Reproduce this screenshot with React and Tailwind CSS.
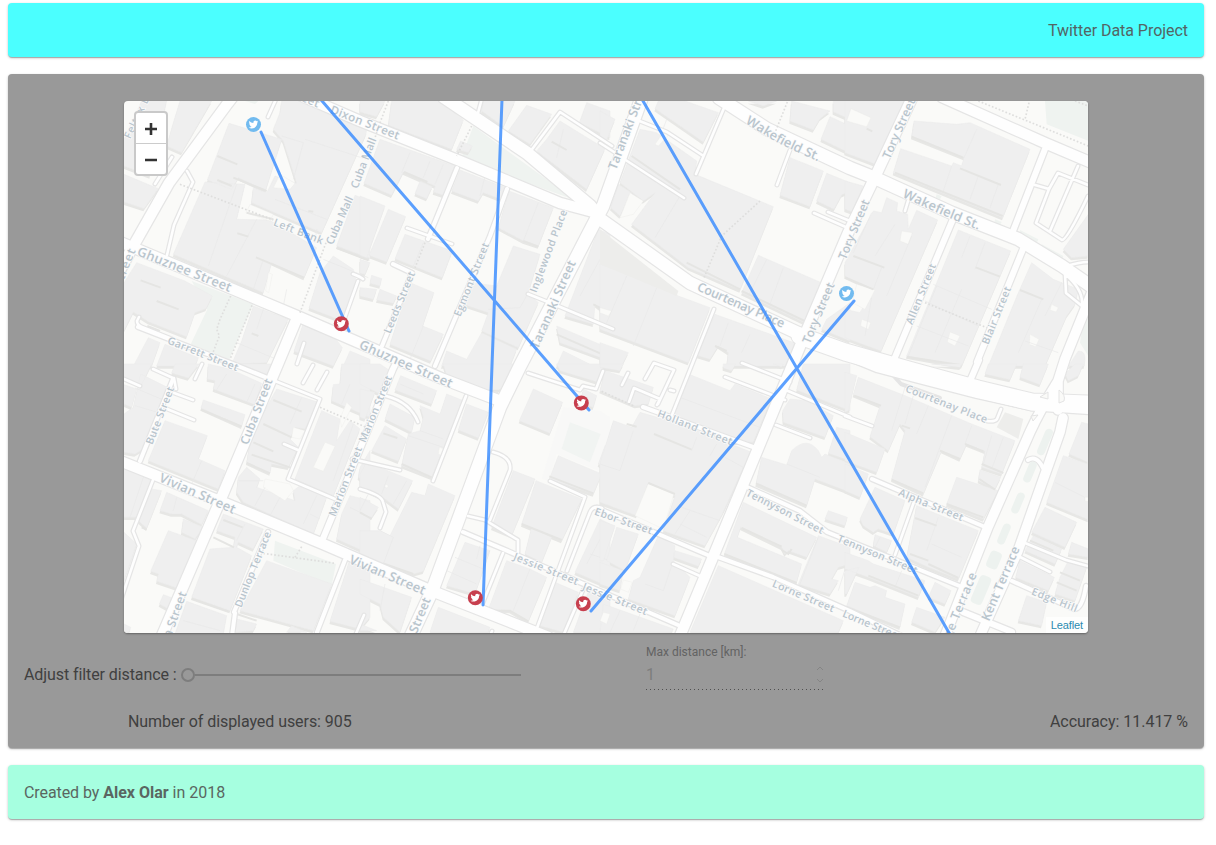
import React from 'react';
import { FaTwitter } from 'react-icons/fa';

// Each tile keeps its shapes in local units, three units to a pixel.
const tiles = [
  {
    x: 120, y: 96,
    park: 'M215 555L400 625L328 790L212 745L262 640ZM375 15H415L405 24Z',
    buildings:
      'M65 15H140L90 240L12 210V130ZM180 15H275L185 170L140 150L160 80ZM12 235L115 278L72 338L12 318ZM327 82L485 130L437 283L355 245L335 280L262 252ZM485 15H600L740 90L738 115L605 410L395 320L400 275L440 290L465 240L530 262L490 135L460 100L480 50ZM255 258L375 265L350 370L448 372L590 455L552 545L455 500L430 590L160 475ZM50 500L195 555L277 600L258 638L225 650L200 722L85 677L40 648L12 705V560ZM400 630L505 670L440 800L335 805L365 735ZM705 298L750 315V487L650 450ZM600 530L640 480L700 520L712 570L668 675L567 636ZM550 682L640 720L667 755L640 810L522 766ZM690 765L750 790V810H670ZM85 725L120 740L95 810H40ZM135 745L235 785L225 810H110Z',
    clear: 'M480 235L525 262L510 280L460 275ZM390 325L460 355L450 375L378 350ZM445 530L457 535L446 590L437 585Z',
    ledge: 'M292 180L352 205M292 252L335 270M340 245L440 285M380 350L460 370M352 412L385 422M408 484L552 545M62 553L122 575M110 615L176 640M82 690L120 705M395 712L415 720M565 345L580 347M650 456L745 493',
    seams: 'M350 265L265 510M410 370L320 540M485 120L550 140L520 250M555 130L740 190M465 310L620 370M430 490L400 580M500 580L490 630M590 400L585 440M555 690L700 745M430 640L410 700M350 740L470 790M610 490L745 545',
    paths: 'M180 265L460 372M332 600L300 670L290 700L298 720L275 780M396 628L330 790M618 440L540 650',
  },
  {
    x: 360, y: 96,
    park: 'M340 90L645 312L430 235L305 182Z',
    buildings:
      'M0 15H75L50 62L0 48ZM95 15H240L310 72L275 160L85 88ZM60 130L285 210L250 298L220 288L225 270L130 228L95 298L12 262ZM180 255L217 272L200 308L165 293ZM300 222L437 275L422 310L370 290L355 315L275 285ZM302 135L337 150L325 170L290 160ZM0 300L75 330L20 485L0 478ZM85 340L137 362L80 498L27 478ZM135 415L277 465L247 545L105 488ZM0 490L30 500L15 535L0 532ZM0 575L50 580L40 610L0 600ZM60 580L110 600L100 622L50 612ZM35 538L65 548L60 570L30 562ZM150 560L222 590L188 690L250 715L212 795L90 745ZM447 285L580 335L535 450L490 435L415 395ZM460 450L540 475L505 590L535 620L475 755L365 705L385 650L310 625L335 560L410 570ZM365 710L470 760L450 810H245L260 765L320 790ZM370 15H465L430 92L365 45ZM500 28L575 55L510 145L445 105ZM680 20L750 45V125L658 80ZM600 75L735 158L680 280L530 165L560 130ZM715 400L750 415V660L705 625L700 685L615 660ZM590 690L750 758V795L600 740ZM610 765L700 810H590Z',
    clear: '',
    ledge: 'M575 137L620 162M490 435L535 452M132 228L202 258M700 625L750 650M590 715L750 785',
    seams: 'M150 170L125 230M210 195L190 245M250 205L225 265M190 440L160 510M190 690L150 790M535 320L490 435M385 640L480 635L505 590M375 240L360 300M720 490L660 600M590 185L610 100',
    paths: 'M335 90L290 180M195 440L165 515M85 15L60 80L40 140',
  },
  {
    x: 600, y: 96,
    park: '',
    buildings:
      'M0 45L45 70L20 133L0 125ZM175 15H255L355 50L310 138L165 38ZM120 100L170 110L290 195L285 235L520 332L420 582L265 515L95 385L165 290L130 315L60 260ZM55 265L95 290L60 360L32 335ZM475 478L664 560L614 680L425 590ZM570 185L670 225L630 332L540 298ZM680 232L750 260V285L725 297L702 340L650 315ZM575 15L690 45L660 68L640 102L570 75ZM700 15H750V70L700 48ZM690 62L750 90V172L663 130ZM445 15H530L490 30ZM0 505L100 540L235 600L330 635L265 800L0 700ZM345 655L595 745L565 810H380L385 770L355 750L330 790L290 778ZM0 740L85 770L65 810H0ZM680 670L750 620V735L665 700Z',
    clear: 'M90 290L130 315L100 355L60 365ZM165 145L190 110L205 118L175 150ZM0 635L35 645L25 660L0 650Z',
    ledge: 'M95 180L240 280M425 585L614 675M260 500L420 580M345 750L380 765',
    seams: 'M240 300L165 425M550 515L510 625M500 490L445 600M80 540L20 680M170 575L100 750M385 680L360 750M450 715L425 770M200 70L185 110',
    paths: 'M480 315L365 420L310 550M562 18L525 110',
    beige: 'M0 400L235 585L230 600L0 505Z',
  },
  {
    x: 845, y: 96,
    park: 'M600 15H730V135L605 85ZM525 402L580 430L575 442L525 415ZM590 445L655 480L650 492L590 458ZM725 610H730V780L705 740ZM275 295L290 300L285 310L272 305ZM450 370L470 378L465 388L448 382Z',
    buildings:
      'M0 15H180L92 205L0 170ZM207 75L335 85L375 80L555 160L473 365L145 230L167 158L320 210L325 200L350 210L357 185L200 122ZM0 255L55 270L22 348L0 340ZM125 305L158 320L155 345L188 355L190 400L215 343L278 372L108 765L0 725V640L45 650L85 580L0 540V500L85 345L110 350ZM340 402L497 465L350 810L185 780ZM560 500L625 550L700 580L690 625L665 660L600 810H430L520 590ZM730 355V480L680 485L655 460ZM700 765C725 765 720 790 718 810H670Z',
    clear: 'M18 38L78 65L65 92L5 75ZM50 670L77 680L70 700L47 690ZM315 708L345 720L330 750L307 738ZM555 715L582 730L572 752L553 745ZM620 625L640 635L633 648L615 642ZM170 405L202 410L190 445L165 435ZM35 565L90 582L60 640L22 620Z',
    ledge: 'M345 217L468 267M25 480L118 515M392 514L465 542M525 582L595 610M150 230L473 360M200 122L355 185M185 782L350 808M0 545L85 580M65 98L82 106',
    seams: 'M395 100L357 185M320 210L295 285M400 240L375 310M460 265L435 335M80 350L25 470M150 385L90 480M200 420L125 600M110 515L85 580M375 420L350 485M420 440L390 520M265 565L440 640M240 615L400 690M215 690L370 750M275 570L190 780M350 580L270 770M590 610L520 770M650 560L600 660M540 735L640 770M80 605L60 720',
    paths: 'M400 15L730 150M552 20L540 70M690 15L730 30M240 620L425 695',
  },
  {
    x: 120, y: 364,
    park: 'M465 530L648 600L635 665L460 590Z',
    buildings:
      'M12 0H95L65 62L12 40ZM62 30L152 75L120 155L70 255L45 270L12 265V150L40 130ZM12 62L50 75L35 130L12 120ZM165 0H237L205 42L155 27ZM135 170L262 215L235 285L315 320L295 375L85 290ZM250 108L375 152L365 187L243 132ZM265 0L330 15L425 58L405 122L280 75L285 50L262 45ZM355 0H455L440 32ZM470 75L595 115L555 195L525 190L510 225L535 250L505 310L455 300L450 327L380 295L395 210ZM380 310L420 345L410 370L525 410L520 380L540 365L620 400L580 510L370 415L350 385L355 340ZM605 140L660 165L650 230L690 170L720 195L640 395L525 345ZM665 0H750V160L680 130L635 110L640 62L660 60ZM690 395L750 410V570L650 525L665 450ZM720 310L750 260V365L715 340ZM12 310L95 350L60 460L12 460ZM95 375L125 380L80 493L55 470ZM140 385L265 440L245 482L185 450L155 450L120 440ZM190 465L250 490L225 525L185 505ZM145 500L235 532L170 672L110 652L115 630L92 622ZM12 505L50 540L12 650ZM310 450L430 495L400 555L355 535L350 550L395 575L330 740L215 700L270 555L340 550L345 520L290 500ZM200 712L320 755L310 810H165ZM440 590L635 660L580 800L360 740ZM350 765L410 780L400 800L345 805ZM515 785L560 805H500ZM690 585L750 610V760L720 795L630 772ZM130 692L157 702L145 735L118 720ZM12 780L32 790L28 805H12Z',
    clear: 'M615 235L645 247L610 322L580 310ZM435 345L510 360L520 380L495 410L430 370ZM660 165L680 115L695 130L665 190ZM520 190L555 200L540 225L515 220Z',
    ledge: 'M460 108L545 143M430 180L515 220M400 235L460 262M395 272L510 310M380 297L450 328M243 137L365 187M215 704L325 742M310 468L368 490M280 520L342 550M65 490L80 497M350 750L410 770',
    seams: 'M45 72L135 110M45 125L130 150M405 60L380 115M320 30L285 85M545 100L510 180M435 370L405 425M480 400L450 455M590 395L550 480M570 450L600 465M70 340L30 460M170 400L160 440M690 60L665 120M700 180L640 350M690 430L750 460M190 770L300 800M640 670L600 790M245 290L215 360M375 480L350 530M355 350L430 350',
    paths: 'M600 130L750 195M430 568L645 598M545 548L525 580',
  },
  {
    x: 360, y: 364,
    park: '',
    buildings:
      'M0 0H60L90 20L60 90L0 60ZM0 75L45 85L15 165L0 160ZM122 35L230 80L215 120L105 78ZM90 120L165 160L155 205L75 165ZM260 90L310 110L215 340L125 305L145 210L180 200L190 160L180 125L240 150ZM75 185L140 225L115 292L35 260ZM320 120L385 145L355 222L295 198ZM250 0H465L425 72L400 90L260 35ZM520 75L608 115L570 208L478 170ZM20 295L158 350L115 435L75 405L0 370V330ZM205 360L285 395L190 622L160 630L70 600L0 575V500L60 500L90 515L155 385L195 395ZM0 400L55 430L35 460L0 450ZM315 535L390 560L345 690L260 665ZM440 590L510 615L560 640L505 772L450 740L385 737ZM585 655L655 685L610 805L540 785ZM690 670L750 700V805H640ZM0 645L155 700L120 805L70 760L60 720L0 690ZM0 780L50 800H0ZM235 730L390 790L385 805H210ZM460 320L525 345L455 515L395 490ZM528 350L665 405L605 530L485 480ZM515 490L575 520L545 595L495 570ZM595 275L725 330L700 390L568 345ZM720 465L750 480V670L645 625ZM590 0H720L740 30L715 55L600 20ZM670 75L710 95L700 130L660 120ZM735 245L750 230V320L715 300Z',
    clear: 'M238 250L252 255L245 275L235 270ZM75 360L85 365L82 372L75 370Z',
    ledge: 'M70 208L112 222M125 300L215 340M568 337L700 388M485 480L605 528M385 740L450 740L505 772M70 598L160 630M0 445L35 465M385 80L425 80',
    seams: 'M85 335L65 390M60 500L100 520L70 600M180 200L250 225M145 215L250 250M100 420L140 350M260 620L350 660M285 580L370 615M510 615L460 740M75 660L60 740M745 480L680 600M390 560L370 590M120 60L190 90M690 570L750 590M30 380L0 440M360 545L350 585',
    paths: '',
    pale: 'M610 130L720 140L750 160V240L735 245L715 320L590 270L565 350L545 345Z',
    pitch: 'M630 175L722 210L690 295L605 255Z',
  },
  {
    x: 600, y: 364,
    park: '',
    buildings:
      'M0 0H70L60 20L0 10ZM15 20L160 70L145 120L105 125L0 80ZM265 30L390 80L405 60L515 105L480 185L460 235L405 235L210 150ZM120 145L240 180L455 265L370 445L315 545L190 500L225 395L145 355L110 455L0 415V300L40 170L95 190ZM570 105L620 110L700 155L675 220L550 175L548 140ZM610 0H750V140L590 78ZM485 280L560 303L575 260Q620 215 655 260L665 280L675 270L750 300V385L645 345L620 425L468 360ZM710 190L750 200V290L685 268ZM685 440L742 460L735 485L675 465ZM430 415L650 520L620 580L565 560L555 570L545 550L422 490L412 520L605 600L590 655L373 570ZM655 515L750 550V600L715 610L695 645L715 650L690 690L595 660ZM355 605L730 770L715 805H270ZM175 515L225 545L220 590L270 640L225 755L85 705L100 650L120 640ZM225 560L305 585L295 607L220 580ZM50 490L115 510L75 620L20 590ZM0 470L45 485L10 590H0ZM0 595L70 620L60 680L0 660ZM10 720L220 795L215 805H0ZM370 0H407L395 20L370 12ZM520 0H550L545 8Z',
    clear: 'M145 358L222 390L190 495L105 455ZM70 648L97 655L85 685L62 675ZM10 745L30 750L20 780L0 770Z',
    ledge: 'M162 210L275 257M145 357L225 390M373 570L590 657M425 492L545 548M468 358L620 425M545 558L565 570L575 555M80 180L110 188',
    seams: 'M100 200L60 320L0 300M290 220L275 260M350 240L330 275M240 100L480 190M375 280L430 310L370 445M245 430L360 470M240 480L320 520M135 660L190 680L220 590M560 300L660 340M270 440L225 510M655 520L600 660M740 600L715 680M120 750L100 800M60 740L30 805M130 500L175 515',
    paths: 'M5 82L105 128',
  },
  {
    x: 845, y: 364,
    park: '',
    buildings:
      'M40 40L180 95L380 180L510 230L470 330L410 310L420 262L365 240L345 285L290 260L235 390L140 345L180 200L165 180L130 260L75 218L105 125L25 92ZM0 25L35 35L10 140L0 145ZM0 205L120 255L95 325L0 290ZM0 300L70 330L45 400L0 380ZM335 340L460 380L415 465L305 420ZM405 317L467 340L450 375L400 350ZM90 370L180 410L145 510L115 500L100 495L85 505L55 485L45 465ZM90 512L140 530L125 565L85 545ZM215 425L400 500L340 645L250 610L185 580ZM0 565L70 590L85 600L240 650L220 700L70 640L0 615ZM30 655L75 670L90 665L125 680L120 700L180 720L165 790L5 725ZM215 730L300 760L270 805L200 775ZM270 655L318 680L300 720L250 700ZM0 620L42 610L5 690H0ZM710 175L730 180V295L672 270ZM655 275L730 300V467L605 415ZM600 430L695 475L660 550L560 505ZM565 515L650 555L630 600L540 560ZM525 590L628 640L610 680L512 640ZM670 590L725 610L690 710L630 690L645 640ZM545 695L605 715L590 785L520 770ZM680 535L730 555V580L670 570ZM430 0H515L495 47L420 30ZM535 0H610L585 62L525 40ZM690 0H715L700 35L670 50L660 30ZM260 0H350L345 10Z',
    clear: 'M720 400H730V413L720 411Z',
    ledge: 'M28 95L108 125M170 185L195 193M285 260L345 285M360 240L415 262M410 300L475 327M403 345L450 377M250 600L340 642M195 570L250 590M70 635L220 695M305 420L415 460M555 530L625 560M645 625L705 650M635 655L695 680M140 347L235 388M210 462L275 485M5 730L165 790',
    seams: 'M205 95L180 180M250 125L215 210M320 155L240 370M380 185L360 240M440 215L415 300M475 220L440 315M280 460L245 560M260 540L350 580M630 355L720 400M105 520L90 550M170 620L150 670M180 70L140 200',
    paths: '',
    beige: 'M480 145L535 165L520 225L455 190Z',
  },
];

const roads = [
  // lanes and driveways
  [2, 'M187 171L193 182L174 225L167 255M172 157L155 184M268 117L277 97M139 317L137 321Q137 325 142 327L172 339M363 279Q361 277 353 274M358 281L343 323M297 364L304 343M303 383L313 365M317 390L327 372M270 379L320 399L288 479L335 499M284 444L298 450M153 369L173 378M195 379L202 364M174 393L193 400M167 409L194 420M124 379L140 386M352 459L400 470M386 396Q410 402 418 422M360 489Q382 495 383 502L386 512L380 528M433 481L466 396M493 452Q512 457 510 470L490 520M468 516L485 520L518 540V552M550 481L585 497L537 628M503 553L480 610M567 571L590 512Q593 505 602 508M583 590L564 634M478 113L482 98M530 152L560 112L612 146M407 228L452 244M528 294L553 304L613 329M637 120L667 132L702 155M696 174L724 108M777 185L790 150M814 213L848 228M828 212L850 221M621 157L684 198M600 143L625 159M905 211L908 201M1035 185L1049 189L1058 173L1088 185M1078 166L1050 231M1049 189L1036 223L1062 240Q1067 240 1088 196M1067 266Q1080 262 1088 262M1065 274L1066 293L1082 306Q1084 290 1065 274M629 402L634 388L660 399L657 405M672 415L714 309M628 373L622 385M645 379L654 363L674 370L658 404M670 390L674 391M725 377L785 400M742 363L790 382M776 425L810 438M788 391L850 417M528 373L580 390L583 386L596 389L603 371M673 564L700 576M845 416L872 426M915 499L895 555M1001 409L997 419Q995 422 987 421M1025 543L1066 560L1088 566M1020 557L1050 572M355 636L364 615M492 631L488 640M121 600L139 546L133 531L153 480M176 389L174 378', 2.6],
  [4, 'M382 346L412 273L393 264M428 239L457 168M435 366L490 236L507 189M140 461L173 379M138 327L233 364L270 379M268 532L234 612M232 636L235 613M317 632L345 560M643 407L753 447M597 508L710 556M463 532L503 549L678 625M718 557L773 577L850 611L910 640M747 487L800 511L827 532L962 587M872 479L985 527M1012 581L1074 609Q1082 610 1086 586M1028 460Q1037 455 1043 468', 4],
  [7, 'M322 541L393 369L397 361M1045 149L1013 231M977 362L1023 249M970 381L979 360M893 362L953 219M963 612L1012 632', 6],
  [10, 'M169 183L228 103L235 94M120 270L135 243L169 183M120 242L297 316L443 379L503 402M120 461L220 501L323 544L432 591L548 637M297 318L277 366L220 501L161 638M300 95L360 121L460 161L560 203L590 211M942 97L1045 143L1092 163M912 98L875 177L848 233L803 339L757 451L713 557L680 636', 10.5],
  [12, 'M444 97L527 153L590 206L600 219L690 283L800 334L878 366L920 377L978 392L1032 404L1092 408M642 97L603 206L520 366L500 407L463 507L432 591L411 636M719 98L767 129L850 168L875 178L952 213L1018 239L1062 266L1092 287', 12.5],
  [9, 'M1092 292L1065 359L1058 381Q1040 410 1030 432L988 527L945 636M1063 418L1060 432L1018 551L980 636M1058 381V410', 9.5],
];

const wide = 'M800 336L845 352L912 371L978 389L1032 402L1088 404';

const lawns = [
  [1045, 442, 4, 14], [1030, 472, 4, 11], [1018, 503, 4, 11], [1004, 534, 4, 11], [994, 560, 6, 9], [981, 590, 6, 15],
];

// label, start of its centre line, end of its centre line, font size
const labels = [
  ['Ghuznee Street', 138, 251, 231, 288, 13], ['Ghuznee Street', 360, 344, 452, 384, 13],
  ['Left Bank', 274, 222, 323, 241, 10.5], ['Garrett Street', 168, 340, 238, 368, 10.5],
  ['Cuba Mall', 329, 244, 350, 197, 11], ['Cuba Mall', 354, 188, 373, 138, 11],
  ['Feltex Lane', 127, 138, 155, 79, 10.5], ['Dixon Street', 331, 109, 399, 136, 11.5],
  ['Dixon Street', 252, 77, 319, 104, 11.5], ['Street', 117, 286, 132, 249, 12],
  ['Leeds Street', 387, 333, 412, 272, 10.5], ['Egmont Street', 457, 316, 486, 243, 10.5],
  ['Inglewood Place', 533, 292, 564, 210, 10.5], ['Taranaki Street', 534, 348, 572, 261, 12.5],
  ['Taranaki Street', 612, 169, 645, 82, 12.5], ['Courtenay Place', 698, 286, 784, 324, 12.5],
  ['Tory Street', 806, 343, 831, 283, 12], ['Tory Street', 842, 259, 866, 200, 12],
  ['Tory Street', 886, 158, 912, 99, 12],
  ['Allen Street', 909, 324, 933, 264, 10.5], ['Blair Street', 985, 344, 1008, 287, 10.5],
  ['Cuba Street', 244, 444, 269, 379, 12], ['Bute Street', 149, 444, 171, 387, 10.5],
  ['Vivian Street', 160, 477, 235, 510, 13], ['Vivian Street', 350, 559, 425, 591, 13],
  ['Marion Street', 332, 516, 359, 447, 10.5], ['Marion Street', 362, 442, 389, 376, 10.5],
  ['Dunlop Terrace', 238, 607, 268, 532, 10.5], ['Cuba Street', 159, 659, 183, 592, 12],
  ['Taranaki Street', 391, 685, 427, 598, 12.5],
  ['Jessie Street', 514, 556, 578, 582, 10.5], ['Jessie Street', 583, 586, 647, 612, 10.5],
  ['Ebor Street', 595, 511, 652, 531, 10.5], ['Holland Street', 658, 413, 732, 442, 10.5],
  ['Tennyson Street', 747, 492, 823, 531, 10.5], ['Tennyson Street', 838, 538, 917, 571, 10.5],
  ['Lorne Street', 773, 583, 834, 609, 10.5], ['Lorne Street', 843, 613, 901, 637, 10.5],
  ['Courtenay Place', 906, 388, 987, 420, 10.5], ['Alpha Street', 899, 492, 963, 518, 10.5],
  ['Edge Hill', 1032, 591, 1077, 609, 10.5], ['Kent Terrace', 985, 620, 1016, 547, 12.5],
  ['Cambridge Terrace', 926, 689, 973, 573, 12.5],
];

const links = 'M261 132L349 331M316 94L589 410M502.200 94L483 605M639 94L952 638M854 301L591 611';

const users = [
  [253.5, 124.5, '#72bbef'], [846.5, 293.5, '#72bbef'],
  [341.3, 323.8, '#c73f4e'], [581.3, 402.9, '#c73f4e'],
  [475.3, 597.7, '#c73f4e'], [583.3, 603.7, '#c73f4e'],
];

function StreetLabel({ label }) {
  const [text, x1, y1, x2, y2, size] = label;
  const dx = x2 - x1;
  const dy = y2 - y1;
  const angle = (Math.atan2(dy, dx) * 180) / Math.PI;
  return (
    <text
      transform={`translate(${x1} ${y1}) rotate(${angle})`}
      y={size * 0.34}
      fontSize={size}
      textLength={Math.hypot(dx, dy)}
    >
      {text}
    </text>
  );
}

function CityMap() {
  return (
    <svg viewBox="124 101 964 532" className="block h-full w-full">
      <rect x="124" y="101" width="964" height="532" fill="#fafaf8" />
      {tiles.map((t, i) => (
        <g key={i} transform={`translate(${t.x} ${t.y}) scale(0.33333)`}>
          {t.pale && <path d={t.pale} fill="#f8f8f7" />}
          {t.pitch && <path d={t.pitch} fill="#f1f4f2" />}
          <path d={t.park} fill="#eff3f0" />
          <path d={t.buildings} fill="#e7e7e5" transform="translate(-2 8)" />
        </g>
      ))}
      {tiles.map((t, i) => (
        <g key={i} transform={`translate(${t.x} ${t.y}) scale(0.33333)`}>
          <path d={t.buildings} fill="#efefef" stroke="#ebebea" strokeWidth="1.500" />
          {t.beige && <path d={t.beige} fill="#ededeb" />}
          <path d={t.clear} fill="#fafaf8" stroke="#e9e9e8" strokeWidth="1" />
          <path d={t.seams} fill="none" stroke="#e9e9e8" strokeWidth="2" />
          <path d={t.ledge} fill="none" stroke="#e5e5e3" strokeWidth="6" />
        </g>
      ))}
      <g fill="none" strokeLinecap="round" strokeLinejoin="round">
        {roads.map(([, d, w], i) => (
          <path key={i} d={d} stroke="#e5e5e5" strokeWidth={w + 2.4} />
        ))}
        <path d={wide} stroke="#e5e5e5" strokeWidth="19" />
        <path d="M892 374L901 384L940 398" stroke="#e5e5e5" strokeWidth="4" />
        {roads.map(([, d, w], i) => (
          <path key={i} d={d} stroke="#fefefe" strokeWidth={w} />
        ))}
        <path d={wide} stroke="#fefefe" strokeWidth="17" />
      </g>
      <g fill="#fafaf8" stroke="#e4e4e4">
        <path d="M1048 392L1048 399L1040 397Z" />
        <path d="M1059 390Q1066 395 1064 401L1059 403Z" />
        <path d="M1031 416L1038 415L1033 421Z" />
      </g>
      {lawns.map(([x, y, rx, ry]) => (
        <rect key={y} x={x - rx} y={y - ry} width={rx * 2} height={ry * 2} rx="4" fill="#edf2ef" transform={`rotate(23 ${x} ${y})`} />
      ))}
      {tiles.map((t, i) => (
        <g key={i} transform={`translate(${t.x} ${t.y}) scale(0.33333)`}>
          <path d={t.paths} fill="none" stroke="#dededd" strokeWidth="5" strokeDasharray="5 6" />
        </g>
      ))}
      <g
        className="font-['Open_Sans',sans-serif] font-semibold"
        fill="#b9c5cd"
        stroke="#fbfbfb"
        strokeWidth="1.500"
        paintOrder="stroke"
      >
        {labels.map((l, i) => (
          <StreetLabel key={i} label={l} />
        ))}
        <path id="wakefield-west" d="M745 123L768 137Q784 147 822 163" fill="none" stroke="none" />
        <path id="wakefield-east" d="M902 197L940 214L981 231" fill="none" stroke="none" />
        <text fontSize="13" textLength="83">
          <textPath href="#wakefield-west">Wakefield St.</textPath>
        </text>
        <text fontSize="13" textLength="83">
          <textPath href="#wakefield-east">Wakefield St.</textPath>
        </text>
      </g>
      <path d={links} fill="none" stroke="#3388ff" strokeOpacity="0.8" strokeWidth="3" strokeLinecap="round" />
      {users.map(([x, y, color]) => (
        <g key={`${x}-${y}`}>
          <circle cx={x} cy={y} r="7.500" fill={color} />
          <FaTwitter x={x - 4.8} y={y - 4.8} size="9.6" color="#ffffff" />
        </g>
      ))}
    </svg>
  );
}

const cardShadow = 'shadow-[0_1px_3px_rgba(0,0,0,0.2),0_1px_1px_rgba(0,0,0,0.14),0_2px_1px_-1px_rgba(0,0,0,0.12)]';

export default function App() {
  return (
    <div className="flex h-[845px] flex-col gap-[17px] bg-white px-2 pt-[3px] pr-3 font-[Roboto,sans-serif] text-base leading-6">
      <header className={`flex h-[54px] shrink-0 items-center justify-end rounded bg-[#4bffff] px-4 pt-[2px] tracking-[-0.04px] text-[#546464] ${cardShadow}`}>
        Twitter Data Project
      </header>

      <main className={`flex h-[674px] shrink-0 flex-col rounded bg-[#999999] pt-[27px] text-[#404040] ${cardShadow}`}>
        <div className="relative mx-auto h-[532px] w-[964px] shrink-0 overflow-hidden rounded shadow-[0_1px_2px_rgba(0,0,0,0.35)]">
          <CityMap />
          <div className="absolute top-[10px] left-[10px] flex w-[34px] flex-col rounded border-2 border-[#c9c9c9] bg-white text-black">
            <button className="flex h-[31px] items-center justify-center border-b border-[#cccccc] pt-[2px]" aria-label="Zoom in">
              <svg viewBox="0 0 12 12" className="h-3 w-3"><path d="M6 0V12M0 6H12" stroke="#333333" strokeWidth="2.600" /></svg>
            </button>
            <button className="flex h-[30px] items-center justify-center" aria-label="Zoom out">
              <svg viewBox="0 0 12 12" className="h-3 w-3"><path d="M0 7H12" stroke="#333333" strokeWidth="2.600" /></svg>
            </button>
          </div>
          <div className="absolute right-0 bottom-0 bg-white/70 pr-[5px] pl-[5px] font-['Liberation_Sans',sans-serif] text-[11px] leading-4 tracking-[-0.1px] text-[#2a8ab0]">
            Leaflet
          </div>
        </div>

        <div className="flex h-[76px] shrink-0">
          <div className="flex w-[638px] items-center pt-[8px] pl-4">
            <span className="tracking-[-0.09px] whitespace-pre">Adjust filter distance :</span>
            <span className="ml-[4px] h-[14px] w-[14px] rounded-full border-2 border-[#7d7d7d]" />
            <span className="h-[2px] w-[326px] bg-[#7d7d7d]" />
          </div>
          <div className="flex w-[178px] flex-col pt-[11px]">
            <span className="text-xs leading-4 text-[#636363]">Max distance [km]:</span>
            <div className="flex h-[29px] items-center justify-between text-[#7d7d7d]">
              <span>1</span>
              <svg viewBox="0 0 8 18" className="h-[18px] w-2" fill="none" stroke="#858585">
                <path d="M1 4L4 1L7 4M1 13L4 16L7 13" />
              </svg>
            </div>
            <svg viewBox="0 0 178 1" className="block h-px w-[178px]">
              <path d="M0 .5H178" stroke="#505050" strokeDasharray="1 3" />
            </svg>
          </div>
        </div>

        <div className="flex h-[26px] items-center justify-between pr-4 pl-[120px]">
          <span className="tracking-[-0.06px]">Number of displayed users: 905</span>
          <span className="tracking-[-0.02px]">Accuracy: 11.417 %</span>
        </div>
      </main>

      <footer className={`flex h-[54px] shrink-0 items-center rounded bg-[#a6ffe0] px-4 pt-[2px] text-[#5a6661] ${cardShadow}`}>
        <span>
          <span className="tracking-[-0.08px]">Created by </span>
          <strong className="font-bold">Alex Olar</strong> in 2018
        </span>
      </footer>
    </div>
  );
}
